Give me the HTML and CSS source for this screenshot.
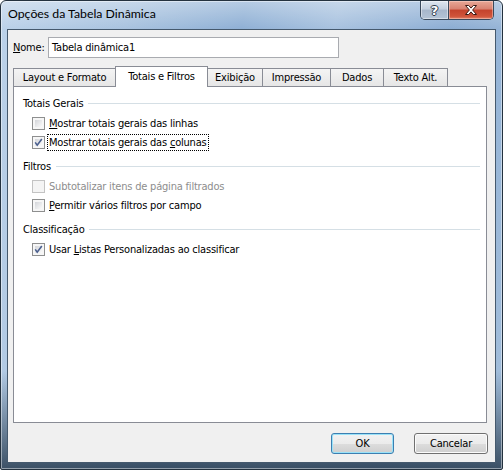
FILE: index.html
```html
<!DOCTYPE html>
<html lang="pt">
<head>
<meta charset="utf-8">
<title>Opções da Tabela Dinâmica</title>
<link rel="stylesheet" href="styles.css">
</head>
<body>
<div class="window">
  <div class="titlebar">
    <span class="title">Opções da Tabela Dinâmica</span>
    <div class="caption">
      <div class="cbtn help">?</div>
      <div class="cbtn close">
        <svg width="16" height="12" viewBox="0 0 16 12"><path d="M2.5 1.5h3.2l2.3 2.6 2.3-2.6h3.2l-3.9 4.5 3.9 4.5h-3.2l-2.3-2.6-2.3 2.6h-3.2l3.9-4.5z" fill="#fff" stroke="#3a1a14" stroke-width="1" stroke-linejoin="round"/></svg>
      </div>
    </div>
  </div>
  <div class="client">
    <div class="name-row">
      <label class="name-label"><u>N</u>ome:</label>
      <div class="input">Tabela dinâmica1</div>
    </div>
    <div class="tabs">
      <div class="tab">Layout e Formato</div>
      <div class="tab active">Totais e Filtros</div>
      <div class="tab">Exibição</div>
      <div class="tab">Impressão</div>
      <div class="tab">Dados</div>
      <div class="tab">Texto Alt.</div>
    </div>
    <div class="panel">
      <div class="group">
        <div class="group-head">Totais Gerais</div>
        <div class="row"><span class="cb"></span><span class="lbl"><u>M</u>ostrar totais gerais das linhas</span></div>
        <div class="row"><span class="cb checked"><svg class="tick" width="13" height="13" viewBox="0 0 13 13"><path d="M3.2 6.4l2 2.8 4.6-6.2" fill="none" stroke="#4a5f8e" stroke-width="1.6"/></svg></span><span class="lbl focus">Mostrar totais gerais das <u>c</u>olunas</span></div>
      </div>
      <div class="group">
        <div class="group-head">Filtros</div>
        <div class="row disabled"><span class="cb"></span><span class="lbl">Subtotalizar itens de página filtrados</span></div>
        <div class="row"><span class="cb"></span><span class="lbl"><u>P</u>ermitir vários filtros por campo</span></div>
      </div>
      <div class="group">
        <div class="group-head">Classificação</div>
        <div class="row"><span class="cb checked"><svg class="tick" width="13" height="13" viewBox="0 0 13 13"><path d="M3.2 6.4l2 2.8 4.6-6.2" fill="none" stroke="#4a5f8e" stroke-width="1.6"/></svg></span><span class="lbl">Usar <u>L</u>istas Personalizadas ao classificar</span></div>
      </div>
    </div>
    <div class="buttons">
      <button class="btn default">OK</button>
      <button class="btn cancel">Cancelar</button>
    </div>
  </div>
</div>
</body>
</html>
```
FILE: styles.css
```css
* { box-sizing: border-box; }
html, body { margin: 0; padding: 0; }
body {
  width: 503px;
  height: 470px;
  overflow: hidden;
  background: #fff;
  font-family: "DejaVu Sans Condensed", "Liberation Sans", Arial, sans-serif;
  font-size: 11px;
  letter-spacing: -0.2px;
  color: #000;
}
.window {
  width: 503px;
  height: 470px;
  border: 1px solid #24323f;
  border-radius: 6px 6px 2px 2px;
  padding: 0 6px 6px 6px;
  display: flex;
  flex-direction: column;
  background:
    linear-gradient(to bottom, rgba(255,255,255,0.35), rgba(255,255,255,0) 28px),
    linear-gradient(to bottom, rgba(40,60,80,0) 370px, rgba(40,60,80,0.85) 468px),
    linear-gradient(100deg, #bcd2e9 0%, #a9c3df 22%, #8fb0d5 42%, #a8c2df 58%, #8cadd3 78%, #a4bfdb 100%);
  box-shadow: inset 0 0 0 1px rgba(255,255,255,0.45);
}
.titlebar {
  height: 28px;
  display: flex;
  align-items: flex-start;
}
.title {
  margin-top: 5px;
  padding-left: 1px;
  font-family: "Lato", "Noto Sans", sans-serif;
  font-size: 12.3px;
  letter-spacing: 0;
  line-height: 16px;
  color: #000;
}
.caption {
  margin-left: auto;
  margin-right: 2px;
  display: flex;
  width: 74px;
  height: 19px;
  border: 1px solid #3a4a5c;
  border-top: none;
  border-radius: 0 0 5px 5px;
  overflow: hidden;
}
.cbtn {
  height: 100%;
  display: flex;
  align-items: center;
  justify-content: center;
}
.help {
  width: 28px;
  border-right: 1px solid #3a4a5c;
  background: linear-gradient(to bottom, #dfe7f0 0%, #c3d0df 45%, #a7b7cb 50%, #b4c4d6 100%);
  box-shadow: inset 0 0 0 1px rgba(255,255,255,0.45);
  color: #fff;
  font-family: "DejaVu Sans", sans-serif;
  font-weight: bold;
  font-size: 13px;
  letter-spacing: 0;
  text-shadow: 1px 0 0 #2e3b4b, -1px 0 0 #2e3b4b, 0 1px 0 #2e3b4b, 0 -1px 0 #2e3b4b;
}
.close {
  flex: 1;
  background: linear-gradient(to bottom, #e8a897 0%, #d88170 45%, #c4432c 50%, #d0543a 85%, #e0846a 100%);
  box-shadow: inset 0 0 0 1px rgba(255,220,210,0.45);
}
.client {
  flex: 1;
  background: #f0f0f0;
  border: 1px solid #45596d;
  padding: 7px 8px 0 5px;
  display: flex;
  flex-direction: column;
}
.name-row {
  display: flex;
  align-items: center;
  height: 21px;
}
.name-label { width: 35px; }
.input {
  width: 291px;
  height: 21px;
  border: 1px solid #a9abb0;
  background: #fff;
  padding-left: 3px;
  line-height: 19px;
}
.tabs {
  display: flex;
  align-items: flex-end;
  height: 20px;
  margin-top: 8px;
  position: relative;
  z-index: 1;
}
.tab {
  height: 18px;
  border: 1px solid #898c95;
  border-bottom: none;
  margin-right: -1px;
  background: linear-gradient(to bottom, #f4f4f4, #e6e6e6);
  text-align: center;
  line-height: 17px;
}
.tab.active {
  height: 21px;
  margin-bottom: -1px;
  background: #fff;
  line-height: 19px;
  position: relative;
  z-index: 2;
}
.tab:nth-child(1) { width: 103px; }
.tab:nth-child(2) { width: 93px; }
.tab:nth-child(3) { width: 56px; }
.tab:nth-child(4) { width: 69px; }
.tab:nth-child(5) { width: 54px; }
.tab:nth-child(6) { width: 65px; }
.panel {
  height: 337px;
  background: #fff;
  border: 1px solid #898c95;
  padding: 6px 6px 0 9px;
}
.group { margin-bottom: 4px; }
.group-head {
  display: flex;
  align-items: center;
  height: 20px;
  margin-bottom: 1px;
}
.group-head::after {
  content: "";
  flex: 1;
  height: 1px;
  background: #d5dfe5;
  margin-left: 5px;
}
.row {
  display: flex;
  align-items: center;
  height: 19px;
  padding-left: 9px;
}
.cb {
  flex: none;
  position: relative;
  width: 13px;
  height: 13px;
  margin-right: 2px;
  border: 1px solid #8e8f8f;
  padding: 2px;
  background: linear-gradient(135deg, #d3d5d9, #fafafa) content-box, #f6f6f6;
}
.tick { position: absolute; left: -1px; top: -1px; }
.lbl {
  border: 1px dotted transparent;
  padding: 0 1px;
  line-height: 15px;
}
.lbl.focus { border-color: #000; }
.disabled .cb {
  border-color: #c3c3c3;
  background: #f4f4f4;
}
.disabled .lbl { color: #8d8d8d; }
.buttons {
  display: flex;
  justify-content: flex-end;
  gap: 20px;
  margin-top: 10px;
  margin-right: -1px;
}
.btn {
  height: 21px;
  padding: 0;
  border: 1px solid #707070;
  border-radius: 3px;
  background: linear-gradient(to bottom, #f2f2f2 0%, #ebebeb 50%, #dddddd 50%, #cfcfcf 100%);
  box-shadow: inset 0 0 0 1px #fbfbfb;
  font-family: inherit;
  font-size: 11px;
  letter-spacing: -0.2px;
  color: #000;
}
.btn.default {
  width: 63px;
  border-color: #3c7fb1;
  box-shadow: inset 0 0 0 1px #9ae2f8;
}
.btn.cancel { width: 74px; }
```
